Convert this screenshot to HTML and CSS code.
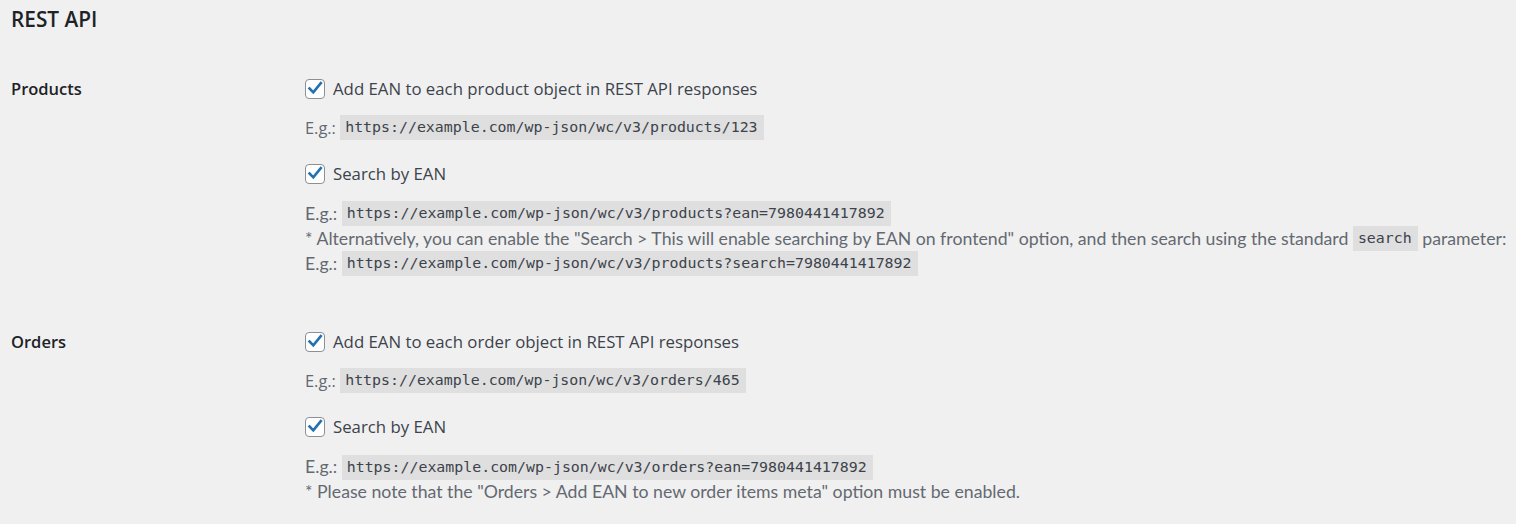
FILE: index.html
```html
<!DOCTYPE html>
<html lang="en">
<head>
<meta charset="utf-8">
<title>REST API</title>
<link rel="stylesheet" href="styles.css">
</head>
<body>
<div class="wrap">
  <h2 class="title">REST API</h2>

  <div class="form-row">
    <div class="th">Products</div>
    <div class="td">
      <label class="option">
        <span class="cb"><svg viewBox="0 0 20 20" width="20" height="20"><path d="M4.5 9.5 L8.3 13.4 L15.8 4.2" fill="none" stroke="#2271b1" stroke-width="2.6" stroke-linecap="square"/></svg></span>
        <span>Add EAN to each product object in REST API responses</span>
      </label>
      <p class="desc">E.g.: <code>https://example.com/wp-json/wc/v3/products/123</code></p>

      <label class="option spaced">
        <span class="cb"><svg viewBox="0 0 20 20" width="20" height="20"><path d="M4.5 9.5 L8.3 13.4 L15.8 4.2" fill="none" stroke="#2271b1" stroke-width="2.6" stroke-linecap="square"/></svg></span>
        <span>Search by EAN</span>
      </label>
      <p class="desc narrow">E.g.: <code>https://example.com/wp-json/wc/v3/products?ean=7980441417892</code><br>* Alternatively, you can enable the "Search &gt; This will enable searching by EAN on frontend" option, and then search using the standard <code>search</code> parameter:<br>E.g.: <code>https://example.com/wp-json/wc/v3/products?search=7980441417892</code></p>
    </div>
  </div>

  <div class="form-row">
    <div class="th">Orders</div>
    <div class="td">
      <label class="option">
        <span class="cb"><svg viewBox="0 0 20 20" width="20" height="20"><path d="M4.5 9.5 L8.3 13.4 L15.8 4.2" fill="none" stroke="#2271b1" stroke-width="2.6" stroke-linecap="square"/></svg></span>
        <span>Add EAN to each order object in REST API responses</span>
      </label>
      <p class="desc">E.g.: <code>https://example.com/wp-json/wc/v3/orders/465</code></p>

      <label class="option spaced">
        <span class="cb"><svg viewBox="0 0 20 20" width="20" height="20"><path d="M4.5 9.5 L8.3 13.4 L15.8 4.2" fill="none" stroke="#2271b1" stroke-width="2.6" stroke-linecap="square"/></svg></span>
        <span>Search by EAN</span>
      </label>
      <p class="desc narrow tight">E.g.: <code>https://example.com/wp-json/wc/v3/orders?ean=7980441417892</code><br>* Please note that the "Orders &gt; Add EAN to new order items meta" option must be enabled.</p>
    </div>
  </div>
</div>
</body>
</html>
```

FILE: styles.css
```css
html, body {
  margin: 0;
  padding: 0;
}

body {
  background: #f0f0f1;
  color: #3c434a;
  font-family: "Open Sans", "Noto Sans", sans-serif;
  font-size: 16.8px;
}

.wrap {
  padding: 0 0 0 11px;
}

.title {
  margin: 0;
  padding-top: 4px;
  height: 47px;
  font-size: 20.8px;
  line-height: 30px;
  font-weight: 600;
  color: #1d2327;
}

.form-row {
  display: grid;
  grid-template-columns: 294px 1fr;
  padding: 25px 0 28px 0;
}

.th {
  font-size: 16.5px;
  font-weight: 600;
  line-height: 26px;
  color: #1d2327;
}

.td {
  display: flex;
  flex-direction: column;
  align-items: flex-start;
}

.option {
  display: flex;
  align-items: center;
  height: 26px;
  line-height: 26px;
  font-size: 16.8px;
  color: #3c434a;
}

.option.spaced {
  margin-top: 21px;
}

.cb {
  display: inline-block;
  box-sizing: border-box;
  width: 20px;
  height: 20px;
  margin-right: 8px;
  border: 1px solid #8c8f94;
  border-radius: 4px;
  background: #fff;
  position: relative;
}

.cb svg {
  position: absolute;
  left: -1px;
  top: -1px;
}

.desc {
  margin: 13px 0 0 0;
  font-size: 16.4px;
  line-height: 25px;
  color: #646970;
}

.desc.narrow {
  margin-top: 14px;
  font-family: "Lato", sans-serif;
  font-size: 17.7px;
}

.desc.tight {
  margin-top: 15px;
  line-height: 24px;
}

code {
  display: inline-block;
  vertical-align: top;
  height: 25px;
  line-height: 25px;
  padding: 0 6px 0 5px;
  background: rgba(0, 0, 0, 0.07);
  color: #3c434a;
  font-family: "DejaVu Sans Mono", "Liberation Mono", monospace;
  font-size: 14.9px;
}
```
